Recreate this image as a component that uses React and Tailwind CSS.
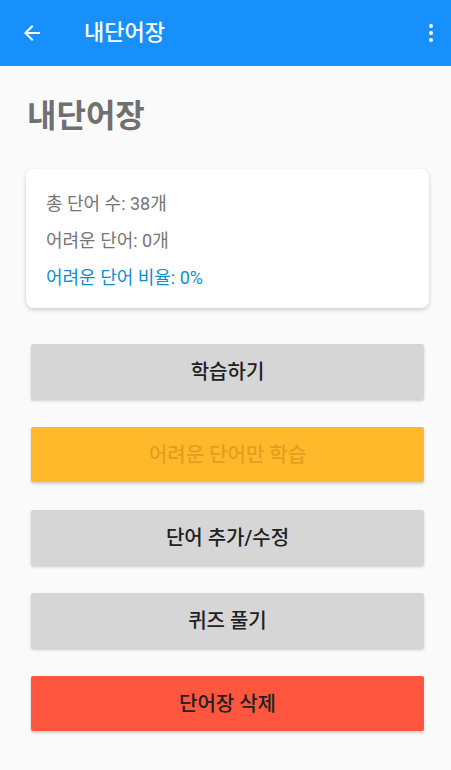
import React from "react";

const STATS = [
  { label: "총 단어 수: 38개", tone: "text-[#757575]" },
  { label: "어려운 단어: 0개", tone: "text-[#757575]" },
  { label: "어려운 단어 비율: 0%", tone: "text-[#0a8fd0]" },
];

const ACTIONS = [
  { label: "학습하기", cls: "bg-[#d6d6d6] text-[#212121]" },
  { label: "어려운 단어만 학습", cls: "bg-[#ffb92b] text-[#e29f1f]" },
  { label: "단어 추가/수정", cls: "bg-[#d6d6d6] text-[#212121]" },
  { label: "퀴즈 풀기", cls: "bg-[#d6d6d6] text-[#212121]" },
  { label: "단어장 삭제", cls: "bg-[#ff5640] text-[#212121]" },
];

export default function App() {
  return (
    <div
      className="w-[451px] h-[770px] bg-[#fafafa] flex flex-col overflow-hidden"
      style={{ fontFamily: 'Roboto, "Noto Sans CJK KR", sans-serif' }}
    >
      {/* App bar */}
      <div className="h-[66px] bg-[#1890fb] flex items-center shrink-0">
        <button className="ml-[20px] w-6 h-6 flex items-center justify-center text-white">
          <svg width="24" height="24" viewBox="0 0 24 24" fill="currentColor">
            <path d="M20 11H7.83l5.59-5.59L12 4l-8 8 8 8 1.41-1.41L7.83 13H20v-2z" />
          </svg>
        </button>
        <h1 className="ml-[40px] text-white text-[22px] font-medium leading-none">내단어장</h1>
        <button className="ml-auto mr-[8px] w-6 h-6 flex items-center justify-center text-white">
          <svg width="24" height="24" viewBox="0 0 24 24" fill="currentColor">
            <circle cx="12" cy="5" r="2" />
            <circle cx="12" cy="12" r="2" />
            <circle cx="12" cy="19" r="2" />
          </svg>
        </button>
      </div>

      {/* Content */}
      <div className="flex flex-col">
        <h2 className="ml-[27px] mt-[32px] text-[32px] leading-[36px] font-bold text-[#707070]">내단어장</h2>

        <div className="ml-[26px] mr-[22px] mt-[35px] bg-white rounded-[8px] shadow-[0_2px_4px_rgba(0,0,0,0.18)] pt-[16px] pb-[12px] px-[20px]">
          {STATS.map((s) => (
            <div key={s.label} className={`h-[37px] flex items-center text-[18px] ${s.tone}`}>
              {s.label}
            </div>
          ))}
        </div>

        <div className="ml-[31px] mr-[27px] mt-[36px] flex flex-col gap-[28px]">
          {ACTIONS.map((a) => (
            <button
              key={a.label}
              className={`h-[55px] rounded-[2px] shadow-[0_2px_3px_rgba(0,0,0,0.18)] text-[20px] font-medium flex items-center justify-center ${a.cls}`}
            >
              {a.label}
            </button>
          ))}
        </div>
      </div>
    </div>
  );
}
